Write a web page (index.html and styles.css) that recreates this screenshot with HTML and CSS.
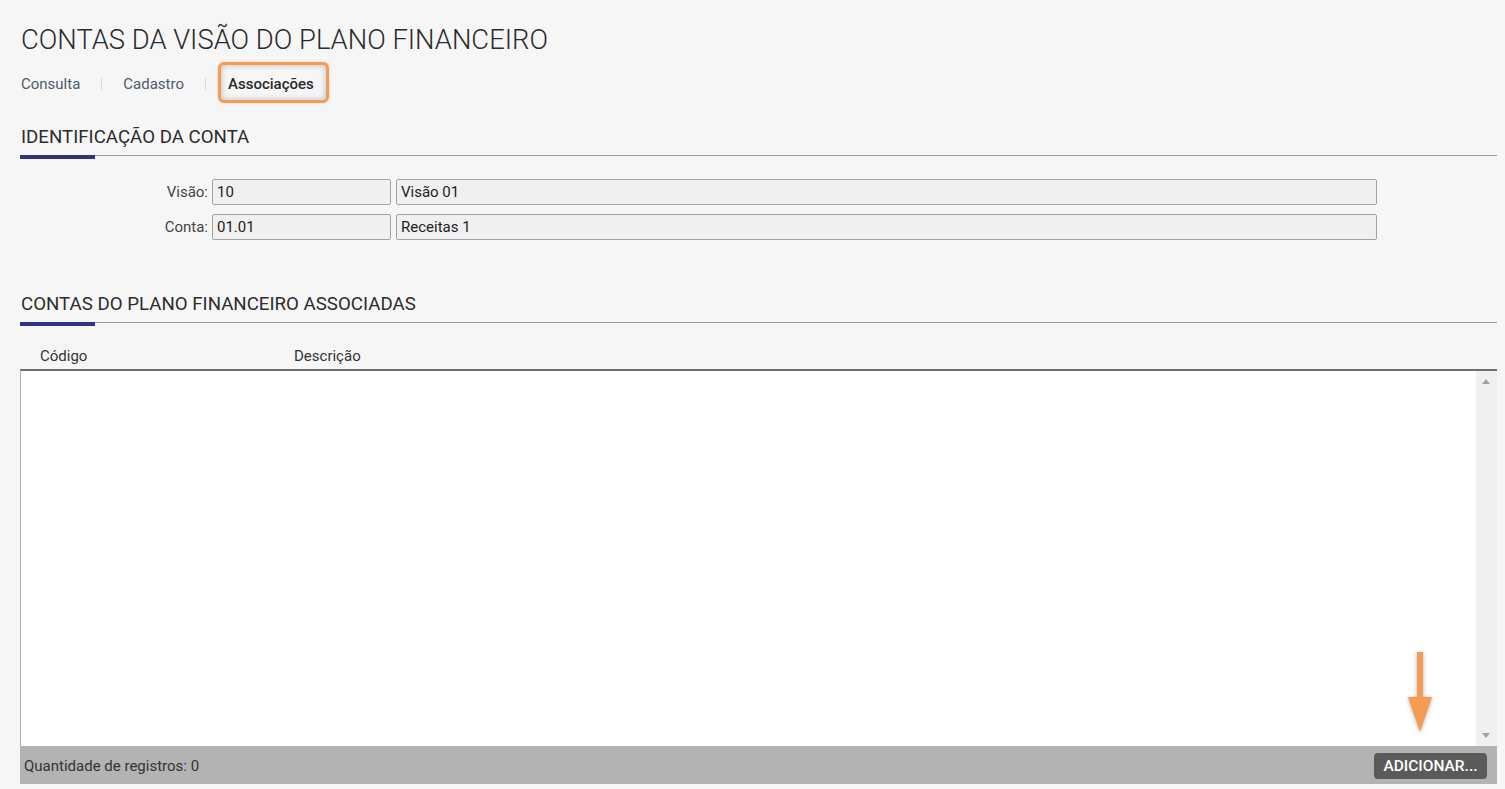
FILE: index.html
```html
<!DOCTYPE html>
<html lang="pt">
<head>
<meta charset="utf-8">
<title>Contas da Visão do Plano Financeiro</title>
<link rel="stylesheet" href="styles.css">
</head>
<body>
<div class="page">
  <h1 class="title">CONTAS DA VISÃO DO PLANO FINANCEIRO</h1>
  <nav class="tabs">
    <a class="tab">Consulta</a>
    <span class="sep"></span>
    <a class="tab">Cadastro</a>
    <span class="sep"></span>
    <a class="tab active">Associações</a>
  </nav>

  <section class="section">
    <h2 class="section-title">IDENTIFICAÇÃO DA CONTA</h2>
    <div class="rule"><span class="rule-accent"></span></div>
    <div class="form">
      <label class="label">Visão:</label>
      <div class="input">10</div>
      <div class="input">Visão 01</div>
      <label class="label">Conta:</label>
      <div class="input">01.01</div>
      <div class="input">Receitas 1</div>
    </div>
  </section>

  <section class="section section-2">
    <h2 class="section-title">CONTAS DO PLANO FINANCEIRO ASSOCIADAS</h2>
    <div class="rule"><span class="rule-accent"></span></div>
    <div class="grid">
      <div class="grid-head">
        <span class="col-code">Código</span>
        <span class="col-desc">Descrição</span>
      </div>
      <div class="grid-body">
        <div class="grid-rows"></div>
        <div class="scrollbar">
          <span class="arrow-up"></span>
          <span class="arrow-down"></span>
        </div>
        <div class="annot-arrow">
          <span class="annot-shaft"></span>
          <span class="annot-head"></span>
        </div>
      </div>
      <div class="grid-foot">
        <span class="count">Quantidade de registros: 0</span>
        <button class="btn">ADICIONAR...</button>
      </div>
    </div>
  </section>
</div>
</body>
</html>
```

FILE: styles.css
```css
* { box-sizing: border-box; }
html, body { margin: 0; padding: 0; }
body {
  background: #f6f6f6;
  font-family: Roboto, "Liberation Sans", Arial, sans-serif;
  color: #333;
  width: 1505px;
  height: 789px;
  overflow: hidden;
}
.page {
  padding: 22px 8px 0 20px;
}
.title {
  margin: 0 0 0 1px;
  font-weight: 300;
  font-size: 27.4px;
  line-height: 36px;
  color: #2b2b2b;
}
.tabs {
  display: flex;
  align-items: center;
  height: 40px;
  margin-top: 4px;
}
.tab {
  font-size: 15px;
  color: #4e5b68;
  line-height: 20px;
  margin-top: 3px;
}
.tab:first-child { margin-left: 1px; }
.sep {
  width: 1px;
  height: 12px;
  background: #d8d8d8;
  margin: 3px 21px 0 21px;
}
.sep + .tab.active { margin-left: -9px; }
.tab.active {
  color: #2a2a2a;
  font-weight: 500;
  padding: 2px 12px 0 7px;
  border: 3px solid #f59b52;
  border-radius: 6px;
  box-shadow: inset 0 0 6px rgba(0,0,0,0.25), 0 0 3px rgba(0,0,0,0.15);
  height: 41px;
  display: flex;
  align-items: center;
  margin-top: 1px;
}
.section { margin-top: 21px; }
.section-title {
  margin: 0 0 0 1px;
  font-size: 18.7px;
  font-weight: 400;
  line-height: 28px;
  color: #2d2d2d;
}
.rule {
  margin-top: 4px;
  height: 1px;
  background: #9c9c9c;
  position: relative;
}
.rule-accent {
  position: absolute;
  left: 0;
  top: 0;
  width: 75px;
  height: 4px;
  background: #2d3282;
}
.form {
  display: grid;
  grid-template-columns: 187px 179px 981px;
  column-gap: 5px;
  row-gap: 9px;
  margin-top: 23px;
}
.label {
  text-align: right;
  font-size: 15px;
  color: #444;
  align-self: center;
  margin-right: -1px;
}
.input {
  height: 26px;
  background: #f0f0f0;
  border: 1px solid #a3a3a3;
  border-radius: 2px;
  font-size: 15px;
  color: #1e1e1e;
  padding: 0 4px;
  display: flex;
  align-items: center;
}
.section-2 { margin-top: 50px; }
.grid { margin-top: 20px; }
.grid-head {
  display: flex;
  font-size: 15px;
  color: #333;
  height: 26px;
  align-items: center;
}
.col-code { width: 274px; padding-left: 20px; }
.grid-body {
  position: relative;
  display: flex;
  height: 377px;
  border-top: 2px solid #6e6e6e;
  border-left: 1px solid #b0b0b0;
  background: #fff;
}
.grid-rows { flex: 1; }
.scrollbar {
  width: 21px;
  background: #f0f0f0;
  position: relative;
}
.arrow-up, .arrow-down {
  position: absolute;
  left: 6px;
  width: 0;
  height: 0;
  border-left: 4px solid transparent;
  border-right: 4px solid transparent;
}
.arrow-up { top: 8px; border-bottom: 5px solid #a3a3a3; }
.arrow-down { bottom: 8px; border-top: 5px solid #a3a3a3; }
.annot-arrow {
  position: absolute;
  left: 1386px;
  top: 281px;
  width: 26px;
  height: 80px;
  filter: drop-shadow(0 1px 2px rgba(0,0,0,0.3));
}
.annot-shaft {
  position: absolute;
  left: 10px;
  top: 0;
  width: 6px;
  height: 46px;
  background: #f59b52;
}
.annot-head {
  position: absolute;
  left: 1px;
  top: 45px;
  width: 0;
  height: 0;
  border-left: 12px solid transparent;
  border-right: 12px solid transparent;
  border-top: 35px solid #f59b52;
}
.grid-foot {
  height: 38px;
  background: #b3b3b3;
  display: flex;
  align-items: center;
  justify-content: space-between;
  padding: 0 10px 0 4px;
}
.count { font-size: 15px; color: #333; margin-top: 1px; }
.btn {
  font-family: Roboto, "Liberation Sans", Arial, sans-serif;
  height: 26px;
  width: 113px;
  background: #5a5a5a;
  color: #fff;
  border: 0;
  border-radius: 4px;
  font-size: 15.5px;
  font-weight: 500;
  padding: 0;
  margin-top: 1px;
}
```
